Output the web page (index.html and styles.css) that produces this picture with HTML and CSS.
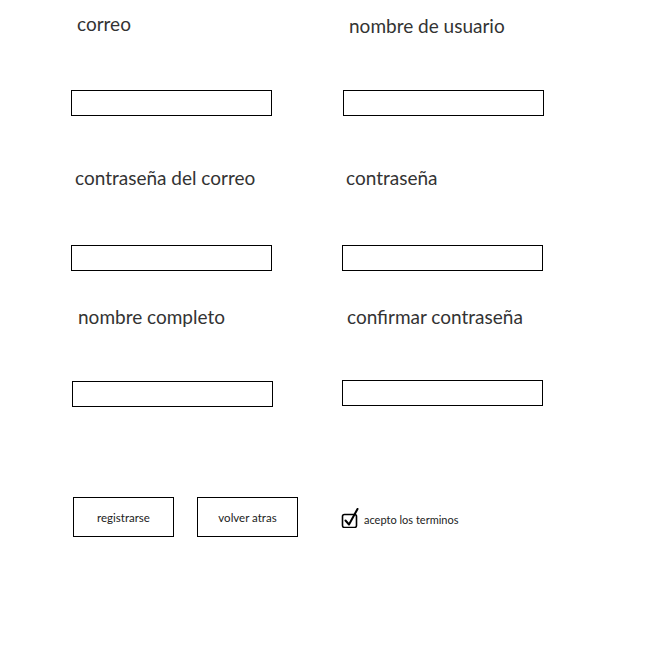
FILE: index.html
```html
<!DOCTYPE html>
<html lang="es">
<head>
<meta charset="utf-8">
<title>Registro</title>
<link rel="stylesheet" href="styles.css">
</head>
<body>
<div class="page">
  <div class="grid">
    <div class="field r1"><span class="label p6">correo</span><input class="box" type="text"></div>
    <div class="field r1 right"><span class="label p6 lift">nombre de usuario</span><input class="box" type="text"></div>
    <div class="field r2"><span class="label p4">contraseña del correo</span><input class="box i2" type="text"></div>
    <div class="field r2 right"><span class="label p3">contraseña</span><input class="box i2 shift" type="text"></div>
    <div class="field r3"><span class="label p7">nombre completo</span><input class="box i3 nudge" type="text"></div>
    <div class="field r3 right"><span class="label p4">confirmar contraseña</span><input class="box i3 shift" type="text"></div>
  </div>
  <div class="actions">
    <button class="btn" type="button">registrarse</button>
    <button class="btn" type="button">volver atras</button>
    <label class="check">
      <svg width="18" height="20" viewBox="0 0 18 20" aria-hidden="true">
        <rect x="1.5" y="6.5" width="14" height="13" rx="2" ry="2" fill="none" stroke="#000" stroke-width="1.6"/>
        <path d="M4.5 12.5 L8 16.5 L16.5 1" fill="none" stroke="#000" stroke-width="2" stroke-linecap="round" stroke-linejoin="round"/>
      </svg>
      <span class="check-text">acepto los terminos</span>
    </label>
  </div>
</div>
</body>
</html>
```

FILE: styles.css
```css
* { box-sizing: border-box; }
html, body { margin: 0; padding: 0; background: #fff; }
body { font-family: "Lato", "Liberation Sans", sans-serif; }

.page {
  width: 670px;
  height: 648px;
  padding-top: 12px;
}

.grid {
  display: grid;
  grid-template-columns: 201px 201px;
  column-gap: 71px;
  padding-left: 71px;
}

.field {
  display: flex;
  flex-direction: column;
  align-items: flex-start;
}
.field.r2 { margin-top: 50px; }
.field.r3 { margin-top: 34px; }

.label {
  display: block;
  height: 24px;
  line-height: 24px;
  font-size: 19px;
  color: #333;
  padding-left: 5px;
  white-space: nowrap;
}
.label.p3 { padding-left: 3px; }
.label.p4 { padding-left: 4px; }
.label.p6 { padding-left: 6px; }
.label.p7 { padding-left: 7px; }
.label.lift { position: relative; top: 2px; }

.box {
  display: block;
  width: 201px;
  height: 26px;
  margin: 54px 0 0 0;
  padding: 0;
  border: 1px solid #000;
  border-radius: 0;
  background: #fff;
  outline: none;
}
.box.i2 { margin-top: 55px; height: 26px; }
.box.i3 { margin-top: 52px; }
.box.shift { margin-left: -1px; }
.box.nudge { margin-left: 1px; }
.field.r3.right .box { margin-top: 51px; }

.actions {
  display: flex;
  align-items: center;
  margin-top: 90px;
  padding-left: 73px;
}

.btn {
  width: 101px;
  height: 40px;
  margin: 0 23px 0 0;
  padding: 0;
  border: 1px solid #000;
  border-radius: 0;
  background: #fff;
  font-family: "Lato", "Liberation Sans", sans-serif;
  font-size: 11.5px;
  color: #222;
}
.btn + .btn { margin-right: 43px; }

.check {
  display: flex;
  align-items: flex-end;
  gap: 5px;
  margin-top: 2px;
}
.check svg { display: block; }
.check-text {
  font-size: 11px;
  color: #222;
  line-height: 14px;
  padding-bottom: 1px;
}
```
